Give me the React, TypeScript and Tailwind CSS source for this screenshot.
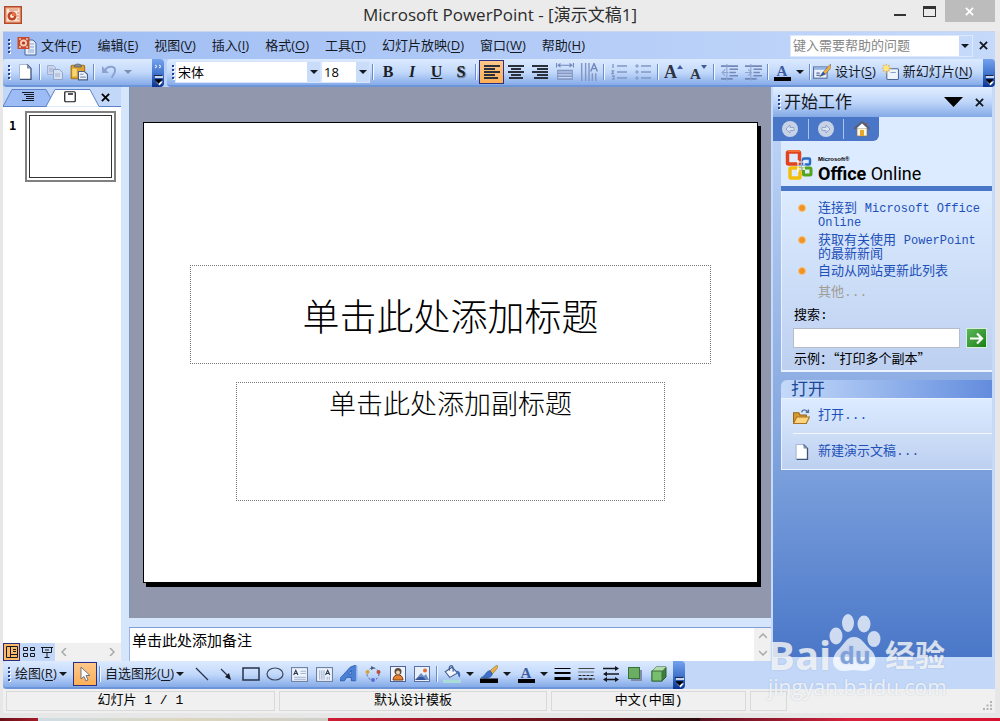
import type { ReactNode } from 'react'

const UI_FONT = "font-['Open_Sans','Noto_Sans_CJK_SC',sans-serif]"
const SONG_FONT = "font-['Liberation_Mono','Noto_Sans_CJK_SC',monospace]"
const BAR = 'bg-linear-to-b from-[#dceaff] via-[#c3d9fb] to-[#86abe8] border-b-2 border-[#6c94d8]'

const menus = [
  ['文件', 'F'],
  ['编辑', 'E'],
  ['视图', 'V'],
  ['插入', 'I'],
  ['格式', 'O'],
  ['工具', 'T'],
  ['幻灯片放映', 'D'],
  ['窗口', 'W'],
  ['帮助', 'H'],
]

function Accel({ text, k }: { text: string; k: string }) {
  return (
    <span className="whitespace-nowrap">
      {text}(<u className="underline-offset-2">{k}</u>)
    </span>
  )
}

function Grip() {
  return (
    <svg className="w-1 h-4 shrink-0" viewBox="0 0 4 16" fill="#27418a" aria-hidden="true">
      {[1, 5, 9, 13].map((y) => (
        <g key={y}>
          <rect x="2" y={y + 1} width="2" height="2" fill="#fff" />
          <rect x="1" y={y} width="2" height="2" />
        </g>
      ))}
    </svg>
  )
}

function Sep({ className = 'mx-1' }: { className?: string }) {
  return <span className={`w-px h-4 bg-[#6a8ccb] border-r border-[#f1f9ff] box-content shrink-0 ${className}`} />
}

function Arrow({ className = 'w-3' }: { className?: string }) {
  return (
    <svg className={`h-3 shrink-0 ${className}`} viewBox="0 0 12 12" aria-hidden="true">
      <path d="M2 4h8L6 8z" fill="currentColor" />
    </svg>
  )
}

interface ToolProps {
  label: string
  children: ReactNode
  active?: boolean
  className?: string
}

function Tool({ label, children, active, className = 'w-6' }: ToolProps) {
  return (
    <button
      type="button"
      aria-label={label}
      className={`h-6 flex items-center justify-center shrink-0 ${active ? 'bg-linear-to-b from-[#fec78a] to-[#fdaf55] border border-[#2a2f83]' : ''} ${className}`}
    >
      {children}
    </button>
  )
}

function Svg({ children, className = 'w-4 h-4' }: { children: ReactNode; className?: string }) {
  return (
    <svg className={`shrink-0 ${className}`} viewBox="0 0 16 16" fill="none" aria-hidden="true">
      {children}
    </svg>
  )
}

function Close({ className = 'w-[10px] h-[10px]' }: { className?: string }) {
  return (
    <svg className={className} viewBox="0 0 10 10" stroke="currentColor" strokeWidth="2" aria-hidden="true">
      <path d="M1 1l8 8M9 1L1 9" />
    </svg>
  )
}

// dark blue end piece of every toolbar
function EndCap({ chevrons = false }: { chevrons?: boolean }) {
  return (
    <button
      type="button"
      aria-label="工具栏选项"
      className="w-3 h-7 shrink-0 rounded-r-sm bg-linear-to-b from-[#74a2ee] via-[#4477cf] to-[#0a3190]"
    >
      <svg className="w-3 h-7" viewBox="0 0 12 28" aria-hidden="true">
        {chevrons && <path d="M3 6l2 1.500L3 9M7 6l2 1.500L7 9" stroke="#fff" fill="none" />}
        <path d="M3 18h8" stroke="#fff" strokeWidth="1.500" />
        <path d="M4 22.500h7l-3.500 4z" fill="#fff" />
        <path d="M2 16.500h8M3 20.500h7l-3.500 4z" stroke="#000" strokeWidth=".6" fill="#000" />
      </svg>
    </button>
  )
}

function PageIcon({ className = 'w-4 h-4' }: { className?: string }) {
  return (
    <Svg className={className}>
      <path d="M3 15.500V.5h7l4 4v11z" fill="#fff" />
      <path d="M2.500 15V.5H10" stroke="#a8b8d6" />
      <path d="M10 .5l4 4v11H3" stroke="#3f5477" strokeWidth="1.300" />
      <path d="M10 .5l4 4h-4z" fill="#7f93b5" />
    </Svg>
  )
}

function AlignIcon({ rows }: { rows: [number, number][] }) {
  return (
    <Svg>
      {rows.map(([x, w], i) => (
        <rect key={i} x={x} y={1 + i * 3} width={w} height="2" fill="#2b313c" />
      ))}
    </Svg>
  )
}

function LetterA() {
  return (
    <svg className="w-[18px] h-5" viewBox="0 0 18 20" aria-hidden="true">
      <text x="9" y="14" textAnchor="middle" fontSize="15" fontWeight="700" fontFamily="Liberation Serif" fill="#3d5c9e">A</text>
      <rect x="1" y="15" width="17" height="4" fill="#000" />
    </svg>
  )
}

function Picker({ label, value, width }: { label: string; value: string; width: string }) {
  return (
    <div className={`relative h-[22px] shrink-0 border border-[#d6e5fc] bg-white ${width}`}>
      <select aria-label={label} defaultValue={value} className="appearance-none w-full h-full pl-0.5 pr-4 text-[13px] leading-5 bg-white text-black">
        <option>{value}</option>
      </select>
      <span className="absolute right-0 inset-y-0 w-[13px] bg-[#c9dcfa] flex items-center justify-center pointer-events-none">
        <Arrow />
      </span>
    </div>
  )
}

function TitleBar() {
  return (
    <header className="h-[31px] flex items-start justify-between bg-[#ebebeb] text-[#2c2c2c]">
      <div className="w-[115px] pl-1 pt-1.5">
        <svg className="w-[18px] h-[18px]" viewBox="0 0 18 18" aria-hidden="true">
          <rect width="18" height="18" fill="#b5482b" />
          <rect x="1.500" y="1.500" width="15" height="15" fill="#f3b694" />
          <rect x="3" y="3" width="12" height="12" fill="#fbe7dc" />
          <path d="M5 4h9M13 7h2M13 10h2M13 13h2" stroke="#d37b5b" />
          <circle cx="8" cy="10" r="4.500" fill="#bb4524" />
          <circle cx="8" cy="10" r="2" fill="#fbe7dc" />
          <path d="M8 10V6a4 4 0 0 1 4 4z" fill="#e5714a" />
        </svg>
      </div>
      <h1 className="text-[17px] leading-[30px] whitespace-nowrap">Microsoft PowerPoint - [演示文稿1]</h1>
      <div className="w-[115px] flex justify-end pr-[5px]">
        <button type="button" aria-label="最小化" className="w-[30px] h-[22px] flex items-end justify-center pb-1.5">
          <span className="w-3 h-0.5 bg-[#333]" />
        </button>
        <button type="button" aria-label="最大化" className="w-[30px] h-[22px] flex items-center justify-center">
          <span className="w-[13px] h-[11px] border border-t-[3px] border-[#333]" />
        </button>
        <button type="button" aria-label="关闭" className="w-[50px] h-[22px] flex items-center justify-center bg-[#bcbcbc] text-white">
          <Close className="w-[9px] h-[9px]" />
        </button>
      </div>
    </header>
  )
}

function MenuBar() {
  return (
    <nav className="h-7 flex items-center pl-1 pr-1.5 bg-linear-to-r from-[#9ebcf3] to-[#c5d9fa] border-t border-[#c9d5ea] text-[13px] text-[#14181f]">
      <Grip />
      <svg className="w-5 h-5 ml-1.5 mr-1" viewBox="0 0 20 20" aria-hidden="true">
        <path d="M8 4h8l3 3v12H8z" fill="#e4eefb" stroke="#4a6596" />
        <path d="M13 8h4M13 11h4M11 14h6M11 16h6" stroke="#8ea6cf" />
        <rect x=".5" y="1" width="12" height="12" fill="#c74a2b" />
        <circle cx="6.500" cy="7" r="3.500" fill="#f7cdb8" />
        <circle cx="6.500" cy="7" r="1.600" fill="#b23a1d" />
        <path d="M2 3h2M9 3h2M2 11h2M9 11h2" stroke="#fff" />
      </svg>
      <div className="flex gap-4">
        {menus.map(([text, k]) => (
          <button type="button" key={k}>
            <Accel text={text} k={k} />
          </button>
        ))}
      </div>
      <div className="flex h-[22px] w-[183px] ml-auto border border-[#dbe8fd] bg-white">
        <input aria-label="键入需要帮助的问题" placeholder="键入需要帮助的问题" className="flex-1 min-w-0 px-0.5 text-[13px] placeholder:text-[#868686]" />
        <button type="button" aria-label="帮助选项" className="w-[13px] bg-[#c5d9fa] flex items-center">
          <Arrow />
        </button>
      </div>
      <button type="button" aria-label="关闭窗口" className="ml-1.5 w-[10px]">
        <Close className="w-[9px] h-[9px]" />
      </button>
    </nav>
  )
}

function Toolbars() {
  return (
    <div className="h-7 flex bg-[#b9d1f8] text-[13px] text-[#14181f]">
      <div className={`flex items-center h-7 w-[149px] pl-1 rounded-l-sm ${BAR}`}>
        <Grip />
        <Tool label="新建" className="w-6 ml-0.5"><PageIcon /></Tool>
        <Sep className="mx-0.5" />
        <Tool label="复制">
          <Svg>
            <path d="M.5 1.500h6l2 2v7h-8z" fill="#c9d4ea" stroke="#9fb0d2" />
            <path d="M6.500 5.500h6l3 3v7h-9z" fill="#d7e0f1" stroke="#8fa3cb" />
            <path d="M2 5h4M2 7h4M8 10h5M8 12h5" stroke="#9fb0d2" />
          </Svg>
        </Tool>
        <Tool label="粘贴">
          <Svg className="w-[18px] h-[18px]">
            <rect x="1" y="2" width="12" height="12" rx="1" fill="#dca22c" stroke="#a2741c" />
            <rect x="2" y="5" width="4" height="7" fill="#f8d570" />
            <path d="M4 3.500V2l2-1h2l2 1v1.500z" fill="#8c8f98" stroke="#555b66" strokeWidth=".7" />
            <path d="M7.500 7.500h5l3 2.500v5h-8z" fill="#eef3fc" stroke="#4a5f86" />
            <path d="M9 10h3M9 12.500h5" stroke="#7f93b5" />
          </Svg>
        </Tool>
        <Sep className="mx-0.5" />
        <Tool label="撤消">
          <Svg>
            <path d="M4 6c3-5 11-4 10 1 0 3-3 4-3 7" stroke="#8ba3d0" strokeWidth="2" />
            <path d="M1 2v7h7z" fill="#8ba3d0" />
          </Svg>
        </Tool>
        <Arrow className="w-[14px] text-[#7f8fb0]" />
      </div>
      <EndCap chevrons />
      <div className={`flex flex-1 min-w-0 items-center h-7 ml-[3px] pl-1 rounded-l-sm ${BAR}`}>
        <Grip />
        <Picker label="字体" value="宋体" width="w-[146px]" />
        <Picker label="字号" value="18" width="w-[49px]" />
        <Sep className="mx-0.5" />
        <div className="flex font-['Liberation_Serif',serif] text-base font-bold text-[#1b1f27]">
          <Tool label="加粗">B</Tool>
          <Tool label="倾斜"><i>I</i></Tool>
          <Tool label="下划线" className="w-[25px]"><u>U</u></Tool>
          <Tool label="阴影"><span className="[text-shadow:1px_1px_1px_#5a6478]">S</span></Tool>
        </div>
        <Sep className="mx-0.5" />
        <Tool label="左对齐" active className="w-[25px]">
          <AlignIcon rows={[[0, 16], [0, 11], [0, 16], [0, 11], [0, 14]]} />
        </Tool>
        <Tool label="居中"><AlignIcon rows={[[0, 16], [3, 10], [0, 16], [3, 10], [1, 14]]} /></Tool>
        <Tool label="右对齐"><AlignIcon rows={[[0, 16], [5, 11], [0, 16], [5, 11], [2, 14]]} /></Tool>
        <Tool label="分散对齐" className="w-[25px]">
          <Svg className="w-[18px] h-[18px]">
            <path d="M.5 0v4M15.500 0v4M2 2h12M4 .5L2 2l2 1.500M12 .5L14 2l-2 1.500" stroke="#7388ba" />
            <path d="M1 6h14v9H1z" fill="#8297c4" />
            <path d="M2 8h12M2 10.500h12M2 13h12" stroke="#c6d6f2" />
          </Svg>
        </Tool>
        <Tool label="更改文字方向">
          <Svg className="w-[18px] h-[18px]">
            <path d="M1.500 0v16M5 0v16M8 0v16M11 9v7M14 9v7" stroke="#8297c4" strokeWidth="1.300" />
            <path d="M9.500 7.500l3-7 3 7M10.500 5h4" stroke="#7388ba" strokeWidth="1.300" />
          </Svg>
        </Tool>
        <Sep className="mx-0.5" />
        <Tool label="编号">
          <Svg>
            <path d="M2 0v4M.5 7h2L1 9.500h2M1 12h2v3H1M6 2h10M6 8h10M6 14h10" stroke="#8297c4" strokeWidth="1.300" />
          </Svg>
        </Tool>
        <Tool label="项目符号">
          <Svg>
            <path d="M6 2h10M6 8h10M6 14h10" stroke="#8297c4" strokeWidth="1.300" />
            <path d="M1 1h2v2H1zM1 7h2v2H1zM1 13h2v2H1z" stroke="#8297c4" />
          </Svg>
        </Tool>
        <Sep className="mx-0.5" />
        <div className="flex font-['Liberation_Serif',serif] font-bold text-[#2d3442]">
          <Tool label="增大字号" className="w-[25px]">
            <span className="text-lg leading-5">A</span>
            <svg className="w-1.5 h-1.5 self-start mt-1" viewBox="0 0 6 6"><path d="M3 1l3 4H0z" fill="#3c5b9d" /></svg>
          </Tool>
          <Tool label="减小字号" className="w-[25px]">
            <span className="text-[15px] leading-5 pt-1">A</span>
            <svg className="w-1.5 h-1.5 self-start mt-1" viewBox="0 0 6 6"><path d="M3 5l3-4H0z" fill="#3c5b9d" /></svg>
          </Tool>
        </div>
        <Sep className="mx-0.5" />
        <Tool label="减少缩进量">
          <Svg className="w-[17px] h-[17px]">
            <path d="M0 2h16M8 5h8M8 8h6M8 11h8M0 14h11" stroke="#7388ba" strokeWidth="1.500" />
            <path d="M7 8H1M4 5L1 8l3 3M5.500 0v16" stroke="#8fa4cf" />
          </Svg>
        </Tool>
        <Tool label="增加缩进量">
          <Svg className="w-[17px] h-[17px]">
            <path d="M0 2h16M8 5h8M8 8h6M8 11h8M0 14h11" stroke="#7388ba" strokeWidth="1.500" />
            <path d="M0 8h6M3 5l3 3-3 3M5.500 0v16" stroke="#8fa4cf" />
          </Svg>
        </Tool>
        <Sep className="mx-0.5" />
        <Tool label="字体颜色" className="w-[22px]"><LetterA /></Tool>
        <Arrow className="w-[14px]" />
        <Sep className="mx-0.5" />
        <button type="button" className="flex items-center gap-1 shrink-0">
          <Svg className="w-[18px] h-[18px]">
            <rect x=".5" y="3.500" width="12" height="10" fill="#e9f1fc" stroke="#56719f" />
            <path d="M1 4h11v2H1z" fill="#8fb2e8" />
            <path d="M3 9h3M3 11h3" stroke="#56719f" />
            <path d="M15.500 1L10 7l-4 5 5-2 5-6z" fill="#f1b13c" stroke="#6b6048" strokeWidth=".5" />
            <path d="M9 7.500L6 12l5-2z" fill="#2c55a9" />
          </Svg>
          <Accel text="设计" k="S" />
        </button>
        <button type="button" className="flex items-center gap-1 ml-1.5 shrink-0">
          <Svg className="w-[17px] h-[17px]">
            <rect x="4.500" y="4.500" width="11" height="10" rx="1" fill="#eef4fd" stroke="#4f6794" />
            <path d="M8 8h5" stroke="#8aa0c8" />
            <path d="M4 0v9M0 4h9M1 1l6 6M7 1L1 7" stroke="#eda928" />
            <circle cx="4" cy="4" r="2.500" fill="#ffe680" />
          </Svg>
          <Accel text="新幻灯片" k="N" />
        </button>
      </div>
      <EndCap />
    </div>
  )
}

function OutlinePane() {
  return (
    <aside className="w-[118px] shrink-0 flex flex-col bg-white">
      <div className="relative h-5 bg-[#c3d8f9]">
        <svg className="absolute inset-0 w-full h-5" viewBox="0 0 118 20" preserveAspectRatio="none" aria-hidden="true">
          <path d="M0 19.500L9 2.500h34l5 9-4 8z" fill="#9dbcf5" stroke="#5c83c6" />
          <path d="M43 19.500l9-17h35l9 17" fill="#fff" stroke="#5c83c6" />
          <path d="M96 19.500h22" stroke="#5c83c6" />
        </svg>
        <div className="relative flex h-5 items-center">
          <button type="button" aria-label="大纲" className="w-12 pl-1 flex justify-center">
            <svg className="w-3 h-3" viewBox="0 0 12 12" stroke="#14181f" aria-hidden="true">
              <path d="M0 1.500h12M2 3.500h10M4 5.500h8M4 7.500h8M0 9.500h12" />
            </svg>
          </button>
          <button type="button" aria-label="幻灯片" className="w-[43px] flex justify-center">
            <svg className="w-3 h-3" viewBox="0 0 12 12" aria-hidden="true">
              <rect x=".75" y=".75" width="10.500" height="10" rx="1" fill="#fff" stroke="#14181f" strokeWidth="1.200" />
              <path d="M4 3h5" stroke="#14181f" strokeWidth="1.500" />
            </svg>
          </button>
          <button type="button" aria-label="关闭窗格" className="w-8 flex justify-center">
            <Close className="w-[9px] h-[9px]" />
          </button>
        </div>
      </div>
      <div className="flex-1 flex items-start pt-1 pl-1.5 gap-2">
        <span className="w-2 pt-[9px] text-xs leading-3 font-bold font-['DejaVu_Sans_Mono',monospace]">1</span>
        <div className="w-[91px] h-[71px] border-2 border-[#808080] p-0.5">
          <div className="w-full h-full border border-[#333]" />
        </div>
      </div>
      <div className="h-[18px] flex items-center bg-[#c3d8f9]">
        <button type="button" aria-label="普通视图" className="w-[17px] h-[18px] flex items-center justify-center bg-[#fdb866] border border-[#2a2f83]">
          <svg className="w-3 h-3" viewBox="0 0 12 12" fill="none" stroke="#14181f"><path d="M.5 .5h11v11H.5zM4.500 .5v11M7 3.500h3M7 5.500h3M4.500 8.500h7" /></svg>
        </button>
        <button type="button" aria-label="幻灯片浏览视图" className="w-[18px] flex justify-center">
          <svg className="w-3 h-3" viewBox="0 0 12 12" fill="none" stroke="#14181f"><path d="M.5 1.500h4v3h-4zM7.500 1.500h4v3h-4zM.5 7.500h4v3h-4zM7.500 7.500h4v3h-4z" /></svg>
        </button>
        <button type="button" aria-label="幻灯片放映" className="w-[17px] flex justify-center">
          <svg className="w-3 h-3" viewBox="0 0 12 12" fill="none" stroke="#14181f"><path d="M0 1.500h12M1.500 1.500v5h9v-5M4 4h4M6 6.500v5M3.500 11.500h5" /></svg>
        </button>
        <div className="flex-1 h-full flex items-center justify-between px-1.5 bg-[#f0f0f0] text-[#a8a8a8]">
          <svg className="w-1.5 h-2" viewBox="0 0 6 8" fill="none" stroke="currentColor" strokeWidth="1.500"><path d="M5 0L1 4l4 4" /></svg>
          <svg className="w-1.5 h-2" viewBox="0 0 6 8" fill="none" stroke="currentColor" strokeWidth="1.500"><path d="M1 0l4 4-4 4" /></svg>
        </div>
      </div>
    </aside>
  )
}

function SlideArea() {
  return (
    <main className={`flex-1 min-w-0 flex flex-col ${SONG_FONT}`}>
      <section className="flex-1 flex bg-[#9198ae] border-l border-[#7f93bb] px-[13px] py-[35px]">
        <div className="flex-1 border border-black bg-white shadow-[3px_4px_0_#000] pt-[142px]">
          <h2 className="mx-[46px] h-[99px] flex items-center justify-center border border-dotted border-[#777] pt-3 text-[37px] font-light leading-[48px] text-black">
            单击此处添加标题
          </h2>
          <p className="mx-[92px] mt-[18px] h-[119px] border border-dotted border-[#777] pt-1 text-[27px] font-light leading-10 text-center text-black">
            单击此处添加副标题
          </p>
        </div>
      </section>
      <div className="h-[10px] bg-[#d5e5fc] border-b border-[#7f9dd6]" />
      <section className="h-[33px] flex bg-white border-l border-[#9bb4e3]">
        <textarea aria-label="备注" defaultValue="单击此处添加备注" className="flex-1 pl-0.5 pt-1.5 text-[15px] leading-[18px] resize-none overflow-hidden" />
        <div className="w-[17px] flex flex-col items-center justify-between py-[5px] bg-[#f0f0f0] text-[#a8a8a8]">
          <svg className="w-2 h-1.5" viewBox="0 0 8 6" fill="none" stroke="currentColor" strokeWidth="1.500"><path d="M0 5l4-4 4 4" /></svg>
          <svg className="w-2 h-1.5" viewBox="0 0 8 6" fill="none" stroke="currentColor" strokeWidth="1.500"><path d="M0 1l4 4 4-4" /></svg>
        </div>
      </section>
    </main>
  )
}

function OfficeLogo() {
  return (
    <svg className="w-[29px] h-[31px] shrink-0" viewBox="0 0 29 31" fill="none" aria-hidden="true">
      <rect x="2.500" y="2" width="12" height="12" rx="1" stroke="#e2431e" strokeWidth="3.500" />
      <rect x="18" y="8.500" width="7" height="6" rx="1" stroke="#2d6cc4" strokeWidth="2.500" />
      <rect x="5" y="18" width="10" height="10" rx="1" stroke="#f3bd0c" strokeWidth="3.500" />
      <rect x="18.500" y="18" width="7.500" height="7" rx="1" stroke="#55a51c" strokeWidth="3" />
      <path d="M3 1h12" stroke="#f36f3a" strokeWidth="2" />
      <path d="M12 12h8M12 19h8M13 10v12M19 10v10" stroke="#fff" strokeWidth="1.200" />
      <path d="M12 15.500h9M16.500 9v12" stroke="#8fb7ec" />
    </svg>
  )
}

function RoundArrow({ flip = false }: { flip?: boolean }) {
  return (
    <svg className="w-4 h-4" viewBox="0 0 16 16" fill="none" aria-hidden="true">
      <circle cx="8" cy="8" r="8" fill="#c8d2e6" />
      <path d={flip ? 'M4 6.500h4V4l4 4-4 4V9.500H4z' : 'M12 6.500H8V4L4 8l4 4V9.500h4z'} stroke="#93a5c9" fill="#dde4f1" />
    </svg>
  )
}

const links = [
  <>连接到 <span className="text-[12px]">Microsoft Office Online</span></>,
  <>获取有关使用 <span className="text-[12px]">PowerPoint</span> 的最新新闻</>,
  <>自动从网站更新此列表</>,
]

function TaskPane() {
  return (
    <aside className="w-[224px] shrink-0 flex flex-col border-l-2 border-r-[3px] border-b-4 border-[#c5d9f9] bg-linear-to-b from-[#c5d9f9] via-[#86a8e0] via-60% to-[#4a77c8]">
      <div className="h-[30px] flex items-center pl-1 pr-1.5 bg-linear-to-b from-[#e2eeff] via-[#bfd6fa] to-[#84a9e6] text-[#14181f]">
        <Grip />
        <h2 className="pl-[3px] text-[17px]">开始工作</h2>
        <button type="button" aria-label="其他任务窗格" className="ml-auto mr-3">
          <svg className="w-[19px] h-[10px]" viewBox="0 0 19 10"><path d="M0 0h19l-9.500 10z" fill="#000" /></svg>
        </button>
        <button type="button" aria-label="关闭任务窗格" className="mr-0.5"><Close className="w-[9px] h-[9px]" /></button>
      </div>
      <div className="h-6 bg-[#dcebff]">
        <div className="flex w-[106px] h-6 items-center rounded-br-md bg-[#4a76c8]">
          <button type="button" aria-label="后退" className="flex-1 flex justify-center"><RoundArrow /></button>
          <span className="w-px h-5 bg-[#a9c4f2]" />
          <button type="button" aria-label="前进" className="flex-1 flex justify-center"><RoundArrow flip /></button>
          <span className="w-px h-5 bg-[#a9c4f2]" />
          <button type="button" aria-label="主页" className="flex-1 flex justify-center">
            <Svg>
              <path d="M3 7h10v8H3z" fill="#fdf6e3" stroke="#8a7a59" strokeWidth=".7" />
              <path d="M11 2h2v4h-2z" fill="#b8442f" />
              <path d="M0 8l8-7 8 7" stroke="#58606f" strokeWidth="1.800" />
              <path d="M3 7l5-4.500L13 7z" fill="#fff" />
              <rect x="6" y="9" width="4" height="6" fill="#e8a62b" />
            </Svg>
          </button>
        </div>
      </div>
      <div className="flex flex-col pl-2">
        <div className="h-[45px] flex items-center gap-1 pl-1 pt-1 bg-[#dcebff] text-black">
          <OfficeLogo />
          <div className="pt-2">
            <p className="text-[6px] leading-[7px] font-bold font-['Liberation_Sans',sans-serif]">Microsoft®</p>
            <p className="text-lg leading-[21px] whitespace-nowrap font-['Roboto','Liberation_Sans',sans-serif]">
              <b>Office</b> Online
            </p>
          </div>
        </div>
        <div className="h-[5px] bg-[#4a76c8]" />
        <section className={`pt-[11px] pb-1.5 border-l border-b-2 border-[#eaf2fe] bg-linear-to-b from-[#dcebff] to-[#bdd0f0] text-[13px] leading-[13px] ${SONG_FONT}`}>
          <ul className="flex flex-col gap-1 pl-4 pr-2 text-[#1d50b8]">
            {links.map((link, i) => (
              <li key={i} className="flex gap-3">
                <span className="w-2 h-2 mt-0.5 rounded-full shrink-0 bg-[#f29220] border border-[#f8c27f]" />
                <a href="#office">{link}</a>
              </li>
            ))}
          </ul>
          <a href="#more" className="block w-fit ml-9 mt-2 text-[#a09e95]">其他...</a>
          <label htmlFor="search" className="block mt-[10px] ml-3">搜索:</label>
          <div className="flex items-center gap-1.5 mt-1.5 pl-[11px]">
            <input id="search" className="flex-1 min-w-0 h-5 bg-white border border-[#b4bdcc]" />
            <button type="button" aria-label="搜索" className="w-[21px] h-5 mr-[5px] flex items-center justify-center bg-linear-to-br from-[#5cb85a] to-[#12810f] border border-[#d9efd9]">
              <svg className="w-[15px] h-[15px]" viewBox="0 0 15 15" fill="none" stroke="#fff" strokeWidth="2.200"><path d="M1 7.500h12M8 2.500l5 5-5 5" /></svg>
            </button>
          </div>
          <p className="mt-[3px] ml-3 whitespace-nowrap font-['Noto_Sans_CJK_SC',sans-serif]">示例：“打印多个副本”</p>
        </section>
        <h3 className="mt-2 h-[18px] pl-[10px] rounded-tl-md bg-linear-to-r from-[#c5daf9] to-[#638cdd] text-[17px] leading-[18px] text-[#1c4a97]">打开</h3>
        <section className={`border-y border-l border-[#eaf2fe] bg-linear-to-b from-[#dcebff] to-[#bdd0f0] text-[13px] text-[#1d50b8] ${SONG_FONT}`}>
          <a href="#open" className="flex items-center gap-2 ml-[11px] h-[35px] border-b border-[#f2f7ff]">
            <Svg className="w-[17px] h-[17px]">
              <path d="M.5 14.500v-10h5l1 2h6v8z" fill="#d99a2b" stroke="#94651a" />
              <path d="M.5 14.500l3-6h12l-3 6z" fill="#fbd47b" stroke="#a8742a" />
              <path d="M8 4c1-3 4-3 6 0M14.500 1.500V4H12" stroke="#50709f" strokeWidth="1.300" />
            </Svg>
            打开...
          </a>
          <a href="#new" className="flex items-center gap-2 ml-[11px] h-[35px]">
            <PageIcon className="w-[17px] h-4" />
            新建演示文稿...
          </a>
        </section>
      </div>
    </aside>
  )
}

function DrawingBar() {
  return (
    <div className="h-7 flex bg-[#c3d8f9] text-[13px] text-[#14181f]">
      <div className={`flex items-center h-7 w-[670px] pl-1 rounded-l-sm ${BAR}`}>
        <Grip />
        <button type="button" className="flex items-center pl-1 w-[62px] shrink-0">
          <Accel text="绘图" k="R" />
          <Arrow />
        </button>
        <Tool label="选择对象" active className="w-6">
          <Svg>
            <path d="M4 1v12l3-2.500 2 4.500 2-1-2-4.500h4z" fill="#fff" stroke="#6f7480" />
          </Svg>
        </Tool>
        <Sep className="mx-0.5" />
        <button type="button" className="flex items-center pl-0.5 w-[86px] shrink-0">
          <Accel text="自选图形" k="U" />
          <Arrow />
        </button>
        <Tool label="直线" className="w-[25px]"><Svg><path d="M2 2l12 12" stroke="#27324a" strokeWidth="1.300" /></Svg></Tool>
        <Tool label="箭头"><Svg><path d="M3 3l7 7" stroke="#27324a" strokeWidth="1.300" /><path d="M13 14l-6-3 4-4z" fill="#14181f" /></Svg></Tool>
        <Tool label="矩形" className="w-[25px]">
          <svg className="w-[18px] h-[14px]" viewBox="0 0 18 14" fill="none"><rect x="1" y="1" width="16" height="12" stroke="#27324a" strokeWidth="1.500" /></svg>
        </Tool>
        <Tool label="椭圆">
          <svg className="w-[18px] h-[14px]" viewBox="0 0 18 14" fill="none"><ellipse cx="9" cy="7" rx="8" ry="6" stroke="#3b465c" strokeWidth="1.200" /></svg>
        </Tool>
        <Tool label="文本框" className="w-[25px]">
          <Svg className="w-[17px] h-[17px]">
            <rect x=".5" y="1.500" width="15" height="13" fill="#edf3fd" stroke="#6d7f9f" />
            <path d="M9 5h5M9 7h5M3 10.500h11M3 12.500h11" stroke="#a3b2cf" />
            <path d="M2.500 8.500L4.500 4l2 4.500M3 7h3" stroke="#2d3950" />
          </Svg>
        </Tool>
        <Tool label="竖排文本框">
          <Svg className="w-[17px] h-[17px]">
            <rect x=".5" y="1.500" width="15" height="13" fill="#edf3fd" stroke="#6d7f9f" />
            <path d="M3.500 4v9M5.500 4v9M7.500 4v9M10.500 10v3M12.500 10v3" stroke="#a3b2cf" />
            <path d="M9 8.500L11 4l2 4.500M9.500 7h3" stroke="#2d3950" />
          </Svg>
        </Tool>
        <Tool label="艺术字" className="w-[25px]">
          <Svg className="w-[18px] h-[18px]">
            <path d="M0 12L9 2l5-2v14h-4v-3H6l-2 3H0zM7.500 8H10V5z" fill="#4a80d6" fillRule="evenodd" stroke="#2455a8" strokeWidth=".7" />
            <path d="M14 0l1.500 1v13H14z" fill="#8fb4ec" />
          </Svg>
        </Tool>
        <Tool label="图示">
          <Svg>
            <circle cx="8" cy="8" r="6" stroke="#4d5c7b" strokeDasharray="2 2" />
            <circle cx="2.500" cy="6" r="2" fill="#d9a334" />
            <circle cx="13.500" cy="6" r="2" fill="#c34c3a" />
            <circle cx="8" cy="14" r="2" fill="#5a6fd1" />
            <path d="M6 0l4 2-4 2z" fill="#4d5c7b" />
          </Svg>
        </Tool>
        <Tool label="剪贴画" className="w-[25px]">
          <Svg>
            <rect x=".5" y=".5" width="15" height="15" fill="#eef3fc" stroke="#4d6396" />
            <path d="M3 14c0-7 10-7 10 0z" fill="#e38330" stroke="#7e3b12" />
            <circle cx="8" cy="5.500" r="3.500" fill="#5b4a42" />
            <circle cx="8" cy="6.500" r="2" fill="#f3cda6" />
          </Svg>
        </Tool>
        <Tool label="图片">
          <Svg>
            <rect x=".5" y=".5" width="15" height="15" fill="#e8f0fc" stroke="#5a6ea0" />
            <path d="M1 14l6-7 3 3 2-2 3 6z" fill="#6c8dc9" />
            <path d="M1 14l4-3h4l3 3z" fill="#35549b" />
            <circle cx="11" cy="4.500" r="2" fill="#e36a35" />
          </Svg>
        </Tool>
        <Sep className="mx-0.5" />
        <Tool label="填充颜色">
          <Svg className="w-[18px] h-[18px]">
            <path d="M2 6l6-4 5 5-7 4z" fill="#f0f5fe" stroke="#425b8f" />
            <path d="M6 5c-2-5 3-6 3-2v3" stroke="#425b8f" />
            <path d="M12 5c3 0 4 3 3 6-2-1-1-3-3-4z" fill="#3d6cbc" />
            <rect y="13" width="16" height="3" fill="#a7dcd9" />
          </Svg>
        </Tool>
        <Arrow />
        <Tool label="线条颜色" className="w-[25px]">
          <Svg className="w-[18px] h-[18px]">
            <path d="M15 0L9 5l2 3 5-6z" fill="#edb13e" stroke="#7c6534" strokeWidth=".5" />
            <path d="M9 5c-4 0-4 5-8 6 4 1 9 1 10-3z" fill="#3c6fc5" stroke="#25488c" strokeWidth=".5" />
            <rect y="12" width="16" height="4" fill="#000" />
          </Svg>
        </Tool>
        <Arrow />
        <Tool label="字体颜色" className="w-[25px]"><LetterA /></Tool>
        <Arrow />
        <Tool label="线型" className="w-6">
          <Svg className="w-[17px] h-4"><path d="M0 2.500h16" stroke="#000" /><path d="M0 7h16" stroke="#000" strokeWidth="2" /><path d="M0 12.500h16" stroke="#000" strokeWidth="3" /></Svg>
        </Tool>
        <Tool label="虚线线型">
          <Svg className="w-[17px] h-4"><path d="M0 2.500h16" stroke="#444" /><path d="M0 6h16" stroke="#222" strokeDasharray="1 1" /><path d="M0 9.500h16" stroke="#222" strokeDasharray="3 1" /><path d="M0 13h16" stroke="#222" strokeWidth="1.500" strokeDasharray="4 1" /></Svg>
        </Tool>
        <Tool label="箭头样式" className="w-[25px]">
          <Svg><path d="M0 2.500h13M3 8h13M3 13.500h10" stroke="#14181f" strokeWidth="1.300" /><path d="M12 0l4 2.500L12 5zM4 5.500L0 8l4 2.500zM4 11l-4 2.500L4 16zM12 11l4 2.500-4 2.500z" fill="#14181f" /></Svg>
        </Tool>
        <Tool label="阴影样式">
          <Svg><rect x="4" y="4" width="11" height="11" fill="#7d8da6" /><rect x="1.500" y="1.500" width="11" height="11" fill="#6bad62" stroke="#39713a" /></Svg>
        </Tool>
        <Tool label="三维效果样式">
          <Svg><path d="M1 5l4-4h10v10l-4 4H1z" fill="#3f7d3f" stroke="#2e5f30" /><path d="M1 5l4-4h10l-4 4z" fill="#b4dba8" /><rect x="1" y="5" width="10" height="10" fill="#79bd6f" stroke="#39713a" /></Svg>
        </Tool>
      </div>
      <EndCap />
    </div>
  )
}

function StatusBar() {
  const panel = 'h-5 border border-[#d9d9d9] flex items-center justify-center whitespace-nowrap'
  return (
    <footer className={`flex gap-1 pl-[3px] py-0.5 bg-[#f0f0f0] text-[13px] text-black ${SONG_FONT}`}>
      <div className={`${panel} flex-[270]`}>幻灯片 1 / 1</div>
      <div className={`${panel} flex-[270]`}>默认设计模板</div>
      <div className={`${panel} flex-[195]`}>中文(中国)</div>
      <div className={`${panel} flex-[35]`} />
      <div className="flex-[205] flex items-end justify-end pr-0.5">
        <svg className="w-[10px] h-[10px]" viewBox="0 0 10 10" fill="#b3b3b3" aria-hidden="true">
          <path d="M7 0h2v2H7zM7 3.500h2v2H7zM3.500 3.500h2v2h-2zM7 7h2v2H7zM3.500 7h2v2h-2zM0 7h2v2H0z" />
        </svg>
      </div>
    </footer>
  )
}

function Watermark() {
  return (
    <div className="absolute right-[54px] bottom-5 w-[178px] text-white/75 pointer-events-none [text-shadow:0_0_2px_#7d8ba666]">
      <div className="flex items-end h-[59px] font-bold">
        <span className="w-[61px] text-[40px] leading-[36px] font-['Open_Sans',sans-serif]">Bai</span>
        <svg className="w-[52px] h-[59px]" viewBox="0 0 52 59" aria-hidden="true">
          <g fill="#fff" fillOpacity=".72">
            <ellipse cx="7" cy="22" rx="6.500" ry="8.500" />
            <ellipse cx="19" cy="9" rx="6" ry="9" />
            <ellipse cx="35" cy="10" rx="6.500" ry="8.500" />
            <ellipse cx="45" cy="25" rx="6.500" ry="8" />
            <path d="M25 23c8 0 10 7 16 12 9 7 7 22-6 22-4 0-6-1-10-1s-6 1-10 1C3 57 1 44 9 36c6-5 8-13 16-13z" />
          </g>
          <text x="26" y="50" textAnchor="middle" fontSize="24" fontFamily="Open Sans" fontWeight="700" fill="#7fa2dc">du</text>
        </svg>
        <span className="pl-1 text-[30px] leading-9 whitespace-nowrap">经验</span>
      </div>
      <p className="text-[21px] leading-7 whitespace-nowrap">jingyan.baidu.com</p>
    </div>
  )
}

export default function App() {
  return (
    <div className={`relative min-h-screen flex flex-col bg-[#e7e7e7] ${UI_FONT}`}>
      <TitleBar />
      <div className="flex-1 flex flex-col ml-[3px] mr-[5px]">
        <MenuBar />
        <Toolbars />
        <div className="flex-1 flex">
          <OutlinePane />
          <div className="w-2 shrink-0 bg-[#d5e5fc]" />
          <SlideArea />
          <TaskPane />
        </div>
        <DrawingBar />
        <StatusBar />
      </div>
      {/* sliver of the desktop behind the window */}
      <div className="h-[3px] mt-[5px] flex">
        <div className="flex-[38] bg-linear-to-r from-[#6b1018] to-[#a31a26]" />
        <div className="flex-[290] bg-linear-to-r from-[#cfdde6] via-[#dcd6bd] to-[#cfcfc9]" />
        <div className="flex-[372] bg-linear-to-r from-[#d01c34] via-[#7c1420] to-[#2a0a0c]" />
        <div className="flex-[300] bg-linear-to-r from-[#5a1020] via-[#d8203c] to-[#d81030]" />
      </div>
      <Watermark />
    </div>
  )
}
